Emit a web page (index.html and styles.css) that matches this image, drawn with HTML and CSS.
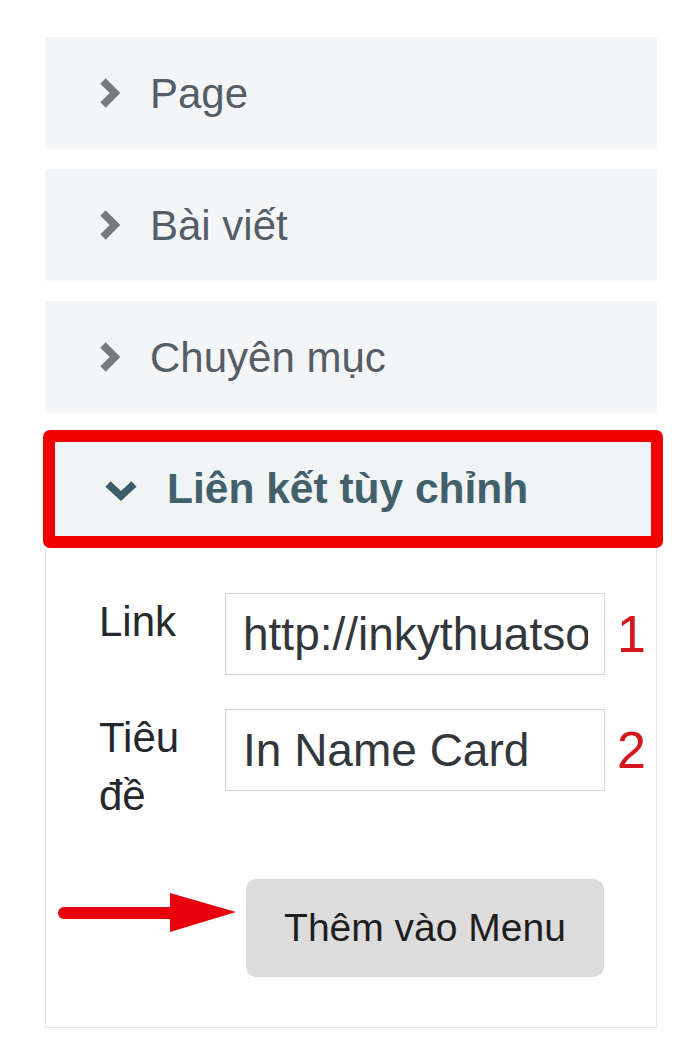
FILE: index.html
```html
<!DOCTYPE html>
<html lang="vi">
<head>
<meta charset="utf-8">
<title>Menu</title>
<link rel="stylesheet" href="styles.css">
</head>
<body>
<div class="sidebar">
  <div class="panel">
    <span class="chev"><svg width="22" height="32" viewBox="0 0 22 32"><polyline points="4,4 16,16 4,28" fill="none" stroke="#767b80" stroke-width="7.5" stroke-linejoin="miter"/></svg></span>
    <span class="title">Page</span>
  </div>
  <div class="panel">
    <span class="chev"><svg width="22" height="32" viewBox="0 0 22 32"><polyline points="4,4 16,16 4,28" fill="none" stroke="#767b80" stroke-width="7.5" stroke-linejoin="miter"/></svg></span>
    <span class="title">Bài viết</span>
  </div>
  <div class="panel">
    <span class="chev"><svg width="22" height="32" viewBox="0 0 22 32"><polyline points="4,4 16,16 4,28" fill="none" stroke="#767b80" stroke-width="7.5" stroke-linejoin="miter"/></svg></span>
    <span class="title">Chuyên mục</span>
  </div>
  <div class="panel-open">
    <span class="chev-down"><svg width="34" height="22" viewBox="0 0 34 22"><polyline points="4,4 17,16 30,4" fill="none" stroke="#3e5c68" stroke-width="7.5" stroke-linejoin="miter"/></svg></span>
    <span class="title-open">Liên kết tùy chỉnh</span>
  </div>
  <div class="panel-body">
    <div class="row">
      <label class="lbl" for="f-link">Link</label>
      <div class="field">
        <input id="f-link" class="input" type="text" value="http://inkythuatso.com/in-name-card">
        <span class="num">1</span>
      </div>
    </div>
    <div class="row row-2">
      <label class="lbl" for="f-title">Tiêu đề</label>
      <div class="field">
        <input id="f-title" class="input" type="text" value="In Name Card">
        <span class="num">2</span>
      </div>
    </div>
    <div class="btn-row">
      <svg class="arrow" width="178" height="42" viewBox="0 0 178 42"><rect x="0" y="15" width="120" height="12" rx="6" fill="#e8000c"/><polygon points="112,1 178,20 112,40" fill="#e8000c"/></svg>
      <button class="btn" type="button">Thêm vào Menu</button>
    </div>
  </div>
</div>
</body>
</html>
```
FILE: styles.css
```css
* { box-sizing: border-box; }
html, body { margin: 0; padding: 0; background: #ffffff; }
body { font-family: "Liberation Sans", Arial, sans-serif; }

.sidebar {
  width: 612px;
  margin: 37px 0 0 45px;
  display: flex;
  flex-direction: column;
}

.panel {
  height: 111px;
  margin-bottom: 21px;
  background: #f3f5f6;
  display: flex;
  align-items: center;
  padding-left: 54px;
  box-shadow: 0 2px 0 #f9fafa;
}

.chev {
  width: 51px;
  display: flex;
  align-items: center;
}
.chev svg { display: block; }

.title {
  font-size: 42px;
  color: #555d66;
  line-height: 1;
  position: relative;
  top: 1px;
}

.panel-open {
  margin: -3px -6px 0 -2px;
  height: 118px;
  border: 12px solid #f20000;
  border-radius: 7px;
  background: #f1f4f5;
  display: flex;
  align-items: center;
  padding-left: 49px;
}

.chev-down {
  width: 63px;
  display: flex;
  align-items: center;
  padding-top: 4px;
}
.chev-down svg { display: block; }

.title-open {
  font-size: 42.5px;
  font-weight: bold;
  color: #41606c;
  line-height: 1;
}

.panel-body {
  border: 1px solid #e8e9ea;
  border-top: none;
  background: #ffffff;
  padding: 45px 0 50px 0;
}

.row {
  display: flex;
  align-items: flex-start;
  margin-left: 53px;
}
.row-2 { margin-top: 34px; }

.lbl {
  width: 126px;
  font-size: 42px;
  line-height: 58px;
  color: #23282d;
}

.field {
  display: flex;
  align-items: center;
}

.input {
  width: 380px;
  height: 82px;
  border: 1px solid #d2d4d6;
  border-radius: 0;
  padding: 0 16px 0 17px;
  font-family: "Liberation Sans", Arial, sans-serif;
  font-size: 46px;
  color: #32373c;
  background: #ffffff;
  outline: none;
}

.num {
  margin-left: 12px;
  font-size: 52px;
  line-height: 1;
  color: #d4161d;
}

.btn-row {
  display: flex;
  align-items: flex-start;
  margin: 54px 0 0 12px;
}

.arrow {
  display: block;
  margin-top: 13px;
}

.btn {
  margin-left: 10px;
  width: 358px;
  height: 98px;
  border: none;
  border-radius: 10px;
  background: #dcdcdc;
  font-family: "Liberation Sans", Arial, sans-serif;
  font-size: 39px;
  color: #1e1e1e;
  padding: 0;
}
```
